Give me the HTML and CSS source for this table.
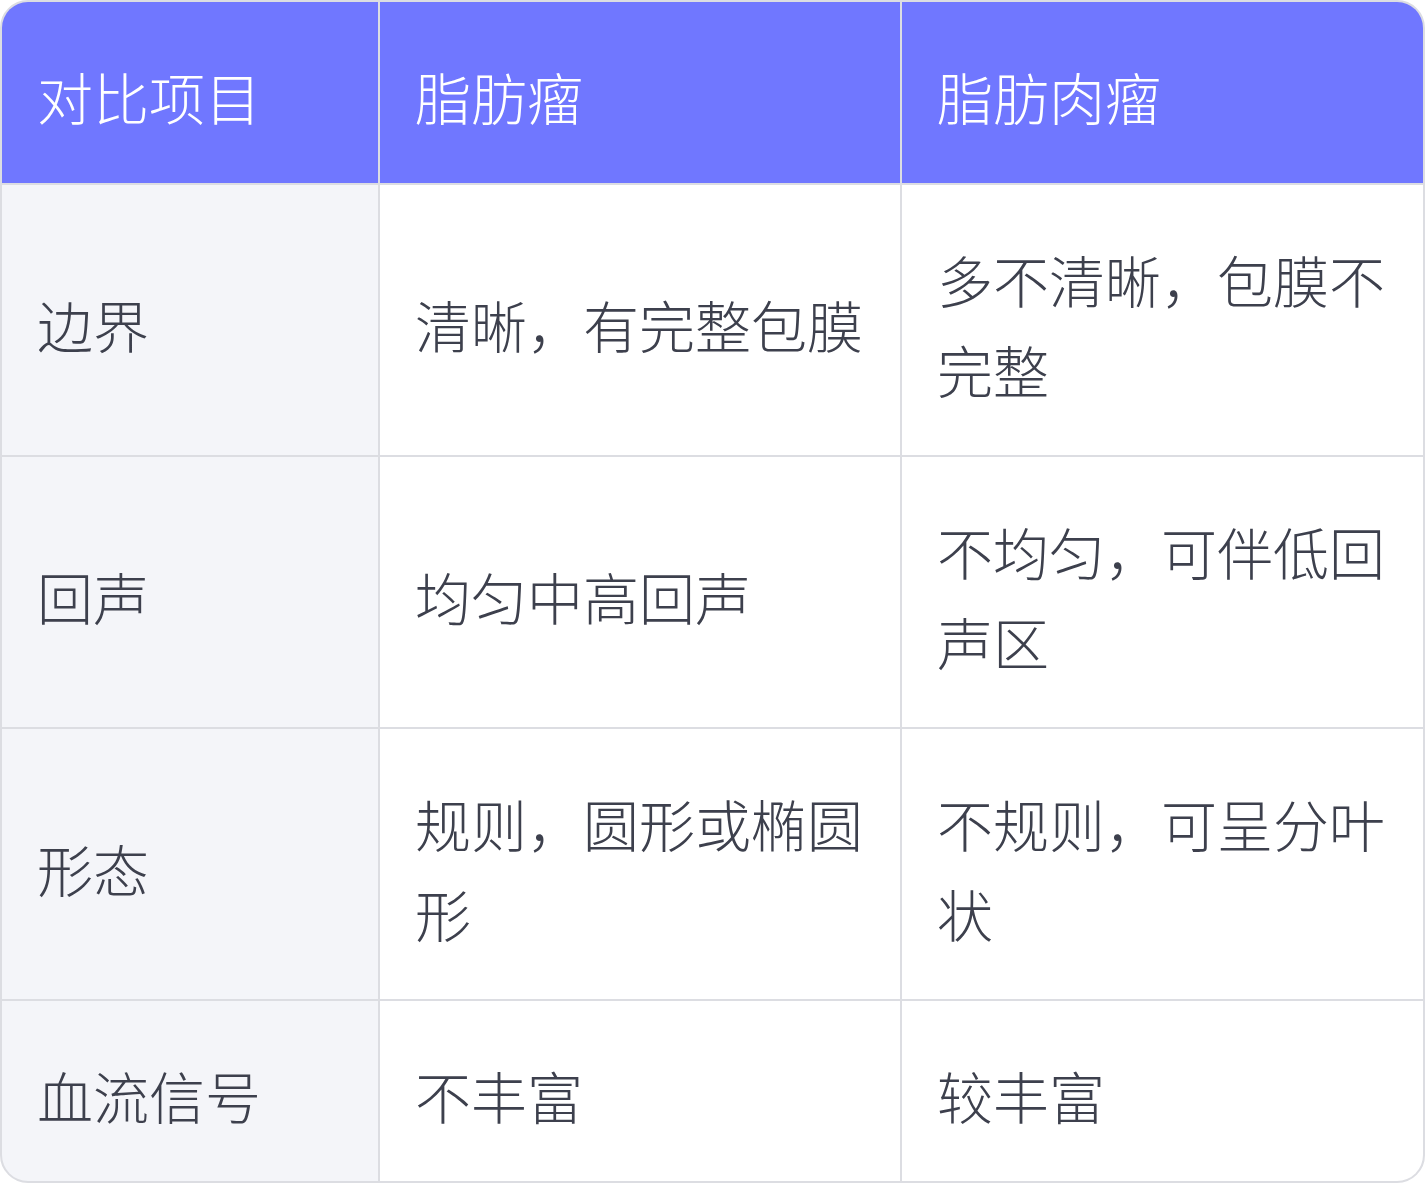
FILE: index.html
```html
<!DOCTYPE html>
<html lang="zh-CN">
<head>
<meta charset="utf-8">
<link rel="stylesheet" href="styles.css">
</head>
<body>
<div class="table">
  <div class="cell head">对比项目</div>
  <div class="cell head">脂肪瘤</div>
  <div class="cell head">脂肪肉瘤</div>

  <div class="cell label">边界</div>
  <div class="cell">清晰，有完整包膜</div>
  <div class="cell">多不清晰，包膜不完整</div>

  <div class="cell label">回声</div>
  <div class="cell">均匀中高回声</div>
  <div class="cell">不均匀，可伴低回声区</div>

  <div class="cell label">形态</div>
  <div class="cell">规则，圆形或椭圆形</div>
  <div class="cell">不规则，可呈分叶状</div>

  <div class="cell label">血流信号</div>
  <div class="cell">不丰富</div>
  <div class="cell">较丰富</div>
</div>
</body>
</html>
```

FILE: styles.css
```css
html, body {
  margin: 0;
  padding: 0;
  background: #ffffff;
}
.table {
  box-sizing: border-box;
  width: 1425px;
  display: grid;
  grid-template-columns: 376px 520px 521px;
  grid-template-rows: 181px 270px 270px 270px 180px;
  gap: 2px;
  background: #dcdde2;
  border: 2px solid #dcdde2;
  border-radius: 28px;
  overflow: hidden;
  font-family: "Noto Sans CJK SC", "Noto Sans", sans-serif;
  font-weight: 300;
  font-size: 56px;
  line-height: 90px;
  color: #3d404d;
}
.cell {
  box-sizing: border-box;
  background: #ffffff;
  padding: 7px 35px 0 35px;
  display: flex;
  align-items: center;
}
.head {
  background: #7077ff;
  color: #ffffff;
}
.label {
  background: #f4f5f9;
}
```
